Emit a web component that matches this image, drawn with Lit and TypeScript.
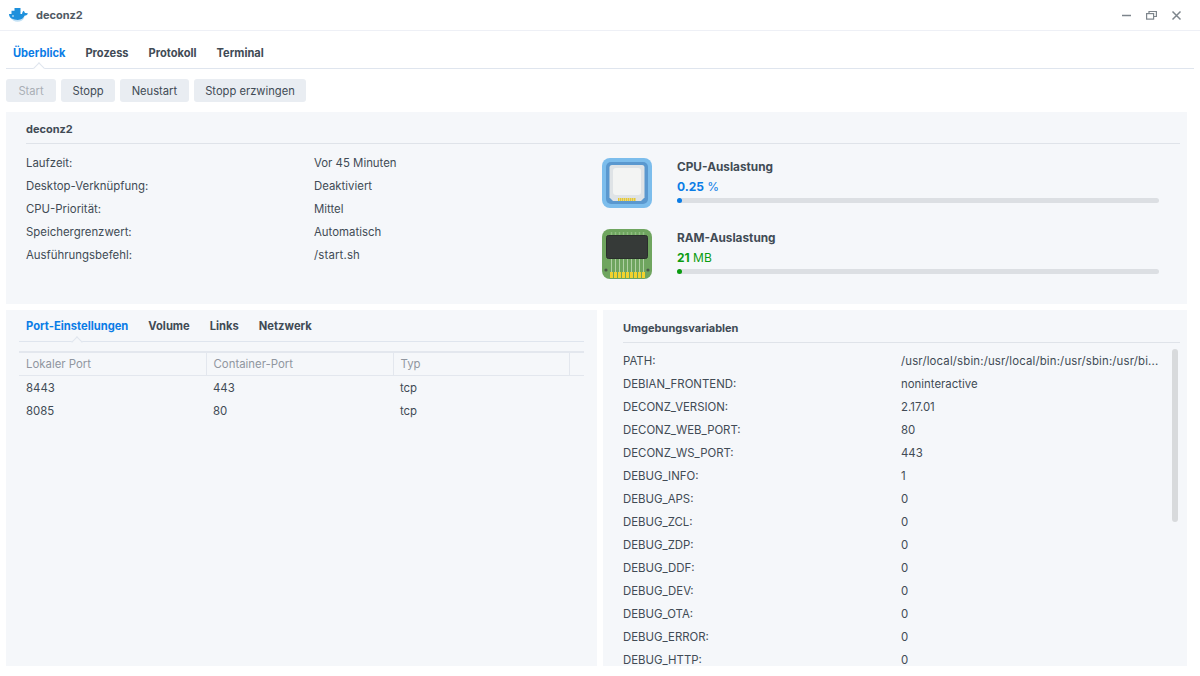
import { LitElement, html, css, svg } from 'lit';
import { customElement } from 'lit/decorators.js';

const INFO = [
  ['Laufzeit:', 'Vor 45 Minuten'],
  ['Desktop-Verknüpfung:', 'Deaktiviert'],
  ['CPU-Priorität:', 'Mittel'],
  ['Speichergrenzwert:', 'Automatisch'],
  ['Ausführungsbefehl:', '/start.sh'],
];

const ENV = [
  ['PATH:', '/usr/local/sbin:/usr/local/bin:/usr/sbin:/usr/bi...'],
  ['DEBIAN_FRONTEND:', 'noninteractive'],
  ['DECONZ_VERSION:', '2.17.01'],
  ['DECONZ_WEB_PORT:', '80'],
  ['DECONZ_WS_PORT:', '443'],
  ['DEBUG_INFO:', '1'],
  ['DEBUG_APS:', '0'],
  ['DEBUG_ZCL:', '0'],
  ['DEBUG_ZDP:', '0'],
  ['DEBUG_DDF:', '0'],
  ['DEBUG_DEV:', '0'],
  ['DEBUG_OTA:', '0'],
  ['DEBUG_ERROR:', '0'],
  ['DEBUG_HTTP:', '0'],
];

const PORTS = [
  ['8443', '443', 'tcp'],
  ['8085', '80', 'tcp'],
];

const whale = svg`
  <svg width="19" height="14" viewBox="0 0 19 14">
    <path fill="#c3e1f5" d="M1 9c1.500 3.200 4.500 4.800 7.500 4.800 3 0 5.500-1.300 7-4.300z"/>
    <path fill="#1e90dc" d="M0 6h13c.2-1.400.8-2.500 1.500-3.200.8.600 1.300 1.400 1.400 2.300.9-.3 2.200-.2 3.100.4-.5 1.300-1.700 2-3.200 2.100-1.100 2.700-3.500 4.300-7 4.300-4.800 0-8.900-1.900-8.800-5.900z"/>
    <path fill="#1e90dc" d="M2.500 2.700h9v4h-9zM5.500 0h6v3h-6z"/>
    <circle cx="4" cy="8" r=".8" fill="#fff"/>
  </svg>`;

const cpuIcon = svg`
  <svg width="50" height="50" viewBox="0 0 50 50">
    <rect width="50" height="50" rx="8" fill="#7cbdec"/>
    <rect x="4" y="4" width="42" height="42" rx="5" fill="#5a98cf"/>
    <path fill="#dfe3e6" d="M10 7h30a2.500 2.500 0 0 1 2.500 2.500v30l-3.500 3.500h-28l-3.500-3.500v-30a2.500 2.500 0 0 1 2.500-2.500z"/>
    <rect x="11" y="10" width="28" height="27" rx="3" fill="#f3f4f3"/>
    <g fill="#e6c832">
      ${[16, 18, 20, 22, 24, 26, 28, 30, 32].map((x) => svg`<rect x=${x} y="40" width="1.500" height="3"/>`)}
    </g>
  </svg>`;

const ramIcon = svg`
  <svg width="50" height="50" viewBox="0 0 50 50">
    <rect width="50" height="50" rx="8" fill="#6fa55f"/>
    <g stroke="#8fbd80" stroke-width="1.500">
      ${[8, 12, 16, 20, 24, 28, 32, 36, 40].map((x) => svg`<line x1=${x + 1.5} y1="3" x2=${x + 1.5} y2="7"/>`)}
    </g>
    <g stroke="#b0d0a4" stroke-width="1">
      ${[8, 12, 16, 20, 24, 28, 32, 36, 40].map((x) => svg`<line x1=${x + 1.5} y1="29" x2=${x + 1.5} y2="43"/>`)}
    </g>
    <rect x="4.500" y="6.500" width="41" height="23" rx="2" fill="#363a38" stroke="#2a2e2c"/>
    <circle cx="4" cy="41" r="1.600" fill="#4a5a48"/>
    <circle cx="46" cy="41" r="1.600" fill="#4a5a48"/>
    <g fill="#f2d22e">
      ${[8, 12, 16, 20, 24, 28, 32, 36, 40].map((x) => svg`<rect x=${x} y="43" width="3" height="6"/>`)}
    </g>
  </svg>`;

@customElement('app-root')
export class AppRoot extends LitElement {
  static styles = css`
    :host {
      display: flex;
      flex-direction: column;
      height: 676px;
      overflow: hidden;
      background: #fff;
      color: #414b55;
      font-family: Inter, 'Noto Sans', sans-serif;
      font-size: 11.400px;
    }

    .titlebar {
      flex: none;
      display: flex;
      align-items: center;
      height: 30px;
      border-bottom: 1px solid #eef0f6;
      padding: 0 18px 0 9px;
    }

    .titlebar .name {
      margin-left: 8px;
      font-weight: 700;
      font-size: 11px;
      color: #505a64;
    }

    .win {
      margin-left: auto;
      display: flex;
      gap: 14px;
    }

    .tabs {
      flex: none;
      display: flex;
      position: relative;
      height: 38px;
      box-sizing: border-box;
      margin: 0 6px;
      gap: 20px;
      padding: 7px 0 0 7px;
      align-items: center;
      font-weight: 700;
      font-size: 11.100px;
      color: #414b55;
      border-bottom: 1px solid #dfe5ee;
    }

    .active {
      color: #0a7ce6;
      position: relative;
    }

    .active::after {
      content: '';
      position: absolute;
      left: 50%;
      width: 7px;
      height: 7px;
      transform: translateX(-50%) rotate(45deg);
      background: #fff;
      border-left: 1px solid #dfe5ee;
      border-top: 1px solid #dfe5ee;
    }

    .tabs .active::after {
      bottom: -12px;
    }

    .buttons {
      flex: none;
      display: flex;
      gap: 5px;
      margin: 10px 6px;
    }

    button {
      height: 23px;
      padding: 0 11.500px;
      border: none;
      border-radius: 3px;
      background: #e9edf2;
      color: #414b55;
      font: inherit;
      font-size: 11.200px;
    }

    button[disabled] {
      min-width: 50px;
      color: #a9afb6;
    }

    .panel {
      background: #f5f7fa;
    }

    .overview {
      flex: none;
      height: 192px;
      margin: 0 13px 6px 6px;
      padding: 0 7px 0 20px;
      box-sizing: border-box;
    }

    .heading {
      height: 32px;
      box-sizing: border-box;
      padding-top: 3px;
      display: flex;
      align-items: center;
      font-weight: 700;
      font-size: 11px;
      border-bottom: 1px solid #dfe3e9;
    }

    .overview-body {
      display: flex;
    }

    .info {
      width: 576px;
      flex: none;
      padding-top: 7px;
    }

    .row {
      display: grid;
      height: 23px;
      align-items: center;
    }

    .path {
      letter-spacing: 0.160px;
    }

    .info .row {
      grid-template-columns: 288px 1fr;
    }

    .meters {
      display: grid;
      grid-template-columns: 50px 482px;
      column-gap: 25px;
      row-gap: 21px;
      padding-top: 14px;
    }

    .meter-title {
      font-weight: 700;
      font-size: 11.800px;
      margin-top: 2px;
    }

    .meter-value {
      margin-top: 5px;
      height: 16px;
      font-size: 12px;
      line-height: 16px;
    }

    .meter-value b {
      font-weight: 700;
    }

    .cpu {
      color: #0a7ce6;
    }

    .ram {
      color: #0a9c10;
    }

    .track {
      height: 5px;
      border-radius: 3px;
      background: #dcdfe3;
      margin-top: 3px;
    }

    .fill {
      height: 5px;
      border-radius: 3px;
    }

    .fill.cpu {
      background: #0a7ce6;
    }

    .fill.ram {
      background: #0a9c10;
    }

    .lower {
      flex: none;
      display: flex;
      gap: 6px;
      height: 356px;
      margin: 0 13px 0 6px;
    }

    .ports {
      width: 591px;
      flex: none;
      padding: 0 13px;
      box-sizing: border-box;
    }

    .subtabs {
      height: 32px;
      box-sizing: border-box;
      padding: 0 0 0 7px;
      display: flex;
      align-items: center;
      gap: 20px;
      font-weight: 700;
      font-size: 11.200px;
      border-bottom: 1px solid #dfe5ee;
    }

    .subtabs .active::after {
      background: #f5f7fa;
      bottom: -13px;
    }

    table {
      width: 100%;
      margin-top: 9px;
      border-collapse: collapse;
      table-layout: fixed;
      border-top: 2px solid #e3e7ee;
    }

    th {
      height: 22px;
      padding: 0 7px;
      text-align: left;
      font-weight: normal;
      color: #9096a0;
      border-bottom: 1px solid #e3e7ee;
      border-right: 1px solid #e3e7ee;
    }

    th:last-child {
      border-right: none;
    }

    td {
      height: 23px;
      padding: 0 7px;
    }

    .env {
      flex: 1;
      position: relative;
      overflow: hidden;
      padding: 0 7px 0 20px;
    }

    .env .heading {
      height: 33px;
      padding-top: 4px;
    }

    .env-list {
      padding-top: 6px;
    }

    .env .row {
      grid-template-columns: 278px 1fr;
    }

    .thumb {
      position: absolute;
      right: 9px;
      top: 39px;
      width: 6px;
      height: 173px;
      border-radius: 3px;
      background: #d8dadc;
    }
  `;

  private valueRow(k: string, v: string) {
    return html`<div class="row"><span>${k}</span><span class=${v.startsWith('/') ? 'path' : ''}>${v}</span></div>`;
  }

  render() {
    return html`
      <div class="titlebar">
        ${whale}
        <span class="name">deconz2</span>
        <div class="win">
          <svg width="11" height="11" viewBox="0 0 11 11"><path d="M1 5.500h9" stroke="#7d858c" stroke-width="1.500"/></svg>
          <svg width="11" height="11" viewBox="0 0 11 11" fill="none" stroke="#7d858c" stroke-width="1.200"><rect x=".6" y="3.600" width="7" height="5.500"/><path d="M3 3.500V1.500h7.400v5H8"/></svg>
          <svg width="11" height="11" viewBox="0 0 11 11"><path d="M1.500 1.500l8 8M9.500 1.500l-8 8" stroke="#7d858c" stroke-width="1.500"/></svg>
        </div>
      </div>
      <div class="tabs">
        <span class="active">Überblick</span>
        <span>Prozess</span>
        <span>Protokoll</span>
        <span>Terminal</span>
      </div>
      <div class="buttons">
        <button disabled>Start</button>
        <button>Stopp</button>
        <button>Neustart</button>
        <button>Stopp erzwingen</button>
      </div>
      <section class="panel overview">
        <div class="heading">deconz2</div>
        <div class="overview-body">
          <div class="info">
            ${INFO.map(([k, v]) => this.valueRow(k, v))}
          </div>
          <div class="meters">
            ${cpuIcon}
            <div>
              <div class="meter-title">CPU-Auslastung</div>
              <div class="meter-value cpu"><b>0.25</b> %</div>
              <div class="track"><div class="fill cpu" style="width: 5px"></div></div>
            </div>
            ${ramIcon}
            <div>
              <div class="meter-title">RAM-Auslastung</div>
              <div class="meter-value ram"><b>21</b> MB</div>
              <div class="track"><div class="fill ram" style="width: 5px"></div></div>
            </div>
          </div>
        </div>
      </section>
      <div class="lower">
        <section class="panel ports">
          <div class="subtabs">
            <span class="active">Port-Einstellungen</span>
            <span>Volume</span>
            <span>Links</span>
            <span>Netzwerk</span>
          </div>
          <table>
            <colgroup><col style="width: 187px" /><col style="width: 187px" /><col style="width: 176px" /><col /></colgroup>
            <tr><th>Lokaler Port</th><th>Container-Port</th><th>Typ</th><th></th></tr>
            ${PORTS.map((p) => html`<tr>${p.map((c) => html`<td>${c}</td>`)}<td></td></tr>`)}
          </table>
        </section>
        <section class="panel env">
          <div class="heading">Umgebungsvariablen</div>
          <div class="env-list">
            ${ENV.map(([k, v]) => this.valueRow(k, v))}
          </div>
          <div class="thumb"></div>
        </section>
      </div>
    `;
  }
}
